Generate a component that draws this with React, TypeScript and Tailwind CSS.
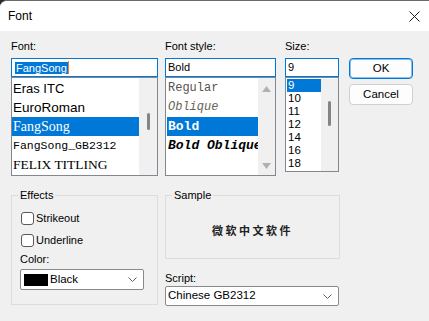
import { ReactNode } from "react";

const ui = { fontFamily: '"Liberation Sans", Arial, sans-serif' };

// list row helpers
const Row = ({
  children,
  selected,
  className = "",
  h = "h-[19px] leading-[19px]",
}: {
  children: ReactNode;
  selected?: boolean;
  className?: string;
  h?: string;
}) => (
  <div
    className={`${h} pl-[1px] whitespace-nowrap overflow-hidden ${
      selected ? "bg-[#0078d7] text-white" : ""
    } ${className}`}
  >
    {children}
  </div>
);

const Thumb = ({ top }: { top: string }) => (
  <div className="w-[17px] bg-[#f0f0f0] flex justify-center">
    <div className={`w-[3px] h-[25px] rounded-full bg-[#858585] ${top}`} />
  </div>
);

const Chevron = () => (
  <svg width="9" height="5" viewBox="0 0 9 5" className="mr-[6px]">
    <path d="M0.5 0.5 L4.5 4.5 L8.5 0.5" fill="none" stroke="#606060" strokeWidth="1" />
  </svg>
);

const Label = ({ children }: { children: ReactNode }) => (
  <div className="h-[15px] leading-[15px] text-[11px] text-black mb-[4px]">{children}</div>
);

export default function App() {
  return (
    <div className="w-[429px] h-[321px] bg-[#2a2a2a] overflow-hidden" style={ui}>
      <div className="h-full flex flex-col rounded-tl-[7px] overflow-hidden border-t border-[#6a6a6a] bg-[#f0f0f0]">
        {/* title bar */}
        <div className="h-[30px] bg-white flex items-center justify-between pl-[8px] pr-[8px]">
          <span className="text-[12px] text-black">Font</span>
          <svg width="11" height="11" viewBox="0 0 11 11" className="mr-[1px]">
            <path d="M0.5 0.5 L10.5 10.5 M10.5 0.5 L0.5 10.5" stroke="#1a1a1a" strokeWidth="1" />
          </svg>
        </div>

        <div className="flex-1 px-[11px] pt-[8px] text-[11px] text-black">
          {/* top section */}
          <div className="flex">
            {/* Font */}
            <div className="w-[147px]">
              <Label>Font:</Label>
              <div className="h-[19px] border border-[#0078d7] bg-white flex items-center pl-[3px]">
                <span className="bg-[#0078d7] text-white px-[1px] leading-[12px]">FangSong</span>
                <span className="w-[1px] h-[13px] bg-[#e8812c]" />
              </div>
              <div className="h-[99px] border border-[#828790] bg-white flex pt-[1px]">
                <div className="flex-1">
                  <Row className="text-[13px]">Eras ITC</Row>
                  <Row className="text-[13.5px]">EuroRoman</Row>
                  <Row selected className="text-[14px]">
                    <span style={{ fontFamily: '"Liberation Serif", serif' }}>FangSong</span>
                  </Row>
                  <Row className="text-[11.5px]">
                    <span style={{ fontFamily: '"Liberation Mono", monospace' }}>FangSong_GB2312</span>
                  </Row>
                  <Row className="text-[13.5px]">
                    <span style={{ fontFamily: '"Liberation Serif", serif' }}>FELIX TITLING</span>
                  </Row>
                </div>
                <div className="w-[18px] bg-[#f0f0f0] flex justify-center -mt-[1px]">
                  <div className="w-[3px] h-[17px] mt-[35px] rounded-full bg-[#858585]" />
                </div>
              </div>
            </div>

            {/* Font style */}
            <div className="w-[111px] ml-[7px]">
              <Label>Font style:</Label>
              <div className="h-[19px] border border-[#0078d7] bg-white flex items-center pl-[2px]">
                Bold
              </div>
              <div
                className="h-[99px] border border-[#828790] bg-white flex pt-[1px]"
                style={{ fontFamily: '"Liberation Mono", monospace' }}
              >
                <div className="flex-1 pl-[1px] overflow-hidden">
                  <Row className="text-[12px] text-[#5a5050]">Regular</Row>
                  <Row className="text-[12px] italic text-[#6a6456]">Oblique</Row>
                  <Row selected className="text-[13px] font-bold">
                    Bold
                  </Row>
                  <Row className="text-[13px] font-bold italic">Bold Oblique</Row>
                </div>
                <div className="w-[17px] bg-[#f0f0f0] flex flex-col items-center justify-between -mt-[1px] pt-[8px] pb-[6px]">
                  <svg width="9" height="6" viewBox="0 0 9 6">
                    <path d="M4.5 0 L9 6 L0 6 Z" fill="#b0b0b0" />
                  </svg>
                  <svg width="9" height="6" viewBox="0 0 9 6">
                    <path d="M0 0 L9 0 L4.5 6 Z" fill="#b0b0b0" />
                  </svg>
                </div>
              </div>
            </div>

            {/* Size */}
            <div className="w-[54px] ml-[9px]">
              <Label>Size:</Label>
              <div className="h-[19px] border border-[#0078d7] bg-white flex items-center pl-[2px]">9</div>
              <div className="h-[95px] border border-[#828790] bg-white flex pt-[1px] overflow-hidden">
                <div className="flex-1 pl-[1px] text-[11.5px]">
                  {["9", "10", "11", "12", "14", "16", "18"].map((s) => (
                    <Row key={s} selected={s === "9"} h="h-[13px] leading-[13px]">
                      {s}
                    </Row>
                  ))}
                </div>
                <Thumb top="mt-[22px]" />
              </div>
            </div>

            {/* Buttons */}
            <div className="w-[64px] ml-[10px]">
              <div className="h-[15px] mb-[4px]" />
              <button className="w-full h-[21px] rounded-[4px] border border-[#0078d7] bg-[#fdfdfd] shadow-[inset_0_0_0_1px_rgba(0,120,215,0.45)] text-[11.5px] text-black">
                OK
              </button>
              <button className="w-full h-[21px] mt-[5px] rounded-[4px] border border-[#d0d0d0] bg-[#fdfdfd] text-[11.5px] text-black">
                Cancel
              </button>
            </div>
          </div>

          {/* bottom section */}
          <div className="flex mt-[12px]">
            <fieldset className="w-[147px] h-[117px] border border-[#dcdcdc] pl-[6px]">
              <legend className="px-[2px] h-[15px] leading-[15px]">Effects</legend>
              <div className="pl-[2px]">
                <div className="h-[22px] mt-[4px] flex items-center">
                  <span className="w-[13px] h-[13px] ml-[1px] rounded-[3px] border border-[#5a5a5a] bg-white" />
                  <span className="ml-[2px]">Strikeout</span>
                </div>
                <div className="h-[22px] flex items-center">
                  <span className="w-[13px] h-[13px] ml-[1px] rounded-[3px] border border-[#5a5a5a] bg-white" />
                  <span className="ml-[2px]">Underline</span>
                </div>
                <div className="h-[14px] leading-[14px] mt-[1px]">Color:</div>
                <div className="w-[124px] h-[21px] mt-[3px] border border-[#8a8a8a] rounded-[2px] bg-white flex items-center justify-between pl-[3px]">
                  <div className="flex items-center">
                    <span className="w-[24px] h-[12px] bg-black" />
                    <span className="ml-[2px] text-[11.5px]">Black</span>
                  </div>
                  <Chevron />
                </div>
              </div>
            </fieldset>

            <div className="w-[175px] ml-[7px]">
              <fieldset className="h-[71px] border border-[#dcdcdc] pl-[6px] flex items-center justify-center">
                <legend className="px-[2px] h-[15px] leading-[15px]">Sample</legend>
                <span
                  className="text-[11px] font-bold tracking-[2.5px] text-[#222] -ml-[6px]"
                  style={{ fontFamily: '"Noto Sans CJK SC", sans-serif' }}
                >
                  微软中文软件
                </span>
              </fieldset>
              <div className="h-[15px] leading-[15px] mt-[12px]">Script:</div>
              <div className="w-[174px] h-[20px] border border-[#8a8a8a] rounded-[2px] bg-white flex items-center justify-between pl-[2px]">
                <span className="text-[11.5px]">Chinese GB2312</span>
                <Chevron />
              </div>
            </div>
          </div>
        </div>
      </div>
    </div>
  );
}
